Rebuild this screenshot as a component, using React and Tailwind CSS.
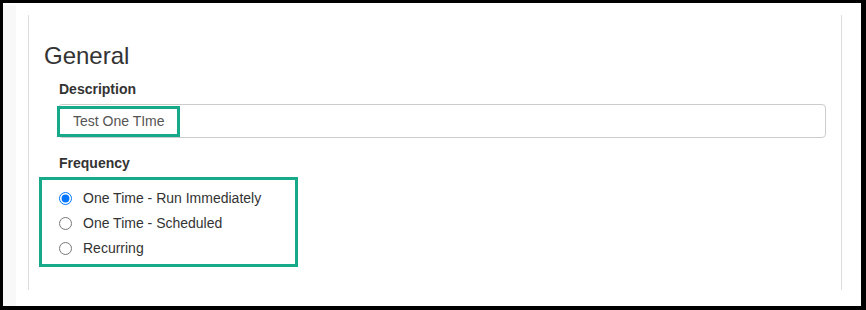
import React from "react";

const options = [
  { label: "One Time - Run Immediately", checked: true },
  { label: "One Time - Scheduled", checked: false },
  { label: "Recurring", checked: false },
];

export default function App() {
  return (
    <div
      className="w-[866px] h-[310px] bg-black pt-[3px] pl-[3px] pr-[5px] pb-[4px] flex"
      style={{ fontFamily: '"Liberation Sans", Arial, sans-serif' }}
    >
      <div className="flex flex-1 bg-white">
        <div className="w-[13px] mt-[2px] bg-[#f8f8f8]" />
        <div className="flex-1 pl-[12px] pr-[19px] pt-[12px]">
          <div className="h-[275px] border-x border-[#dddddd] pl-[15px] pr-[15px] pt-[26px]">
            <h2 className="text-[24px] leading-[29px] text-[#333333] font-normal">
              General
            </h2>
            <div className="pl-[14px]">
              <label className="block mt-[9px] ml-[1px] text-[14px] leading-[20px] font-bold text-[#333333]">
                Description
              </label>
              <div className="relative mt-[5px]">
                <input
                  type="text"
                  readOnly
                  value="Test One TIme"
                  className="w-full h-[34px] rounded-[4px] border border-[#cccccc] pl-[14px] text-[14px] text-[#555555] outline-none"
                  style={{ fontFamily: '"Liberation Sans", Arial, sans-serif' }}
                />
                <div className="absolute left-[-1px] top-[2px] w-[123px] h-[31px] border-[3px] border-[#16a98a]" />
              </div>
              <label className="block mt-[15px] ml-[1px] text-[14px] leading-[20px] font-bold text-[#333333]">
                Frequency
              </label>
              <div className="mt-[4px] -ml-[19px] w-[259px] border-[3px] border-[#16a98a] pl-[17px] pt-[6px] pb-[3px]">
                {options.map((o) => (
                  <div key={o.label} className="flex items-center h-[25px]">
                    <input
                      type="radio"
                      name="freq"
                      readOnly
                      checked={o.checked}
                      className="m-0 w-[13px] h-[13px]"
                    />
                    <span className="ml-[11px] text-[14px] text-[#333333]">
                      {o.label}
                    </span>
                  </div>
                ))}
              </div>
            </div>
          </div>
        </div>
      </div>
    </div>
  );
}
